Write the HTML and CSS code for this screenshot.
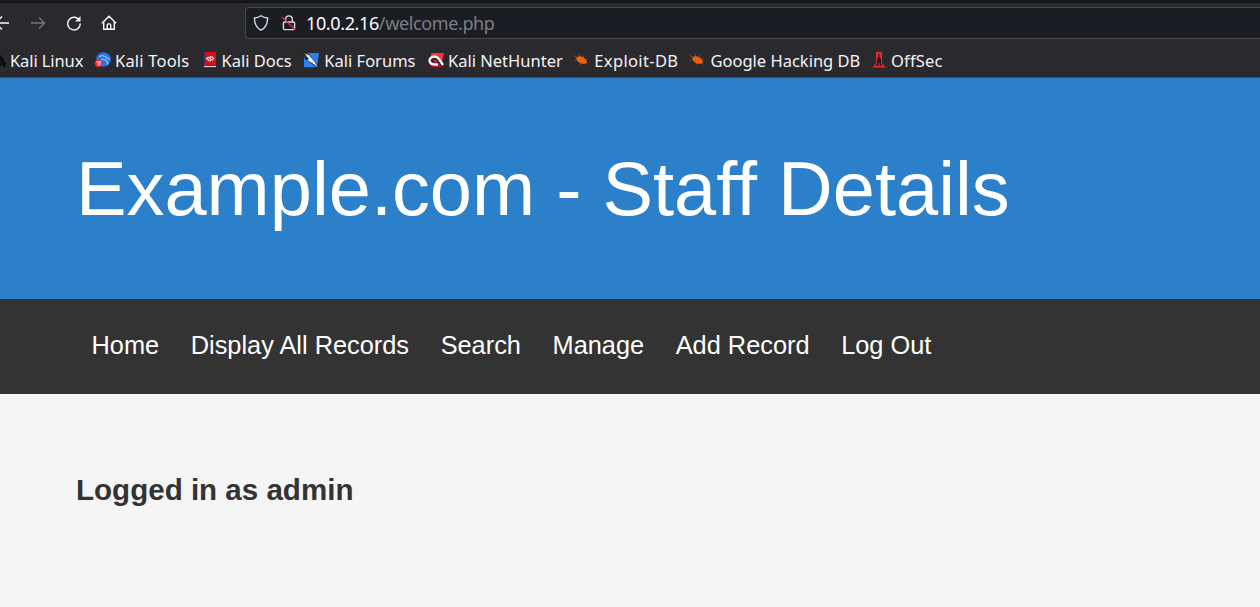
FILE: index.html
```
<!DOCTYPE html>
<html lang="en">
<head>
<meta charset="utf-8">
<title>Staff Details</title>
<link rel="stylesheet" href="styles.css">
</head>
<body>
<div class="browser">
  <div class="tab-edge"></div>
  <div class="toolbar">
    <div class="controls">
      <svg class="control" viewBox="0 0 16 16"><path d="M15 8H1.500M8 1.500 1.500 8 8 14.500"/></svg>
      <svg class="control disabled" viewBox="0 0 16 16"><path d="M1 8h13.500M9 2.500 14.500 8 9 13.500"/></svg>
      <svg class="control" viewBox="0 0 16 16"><path d="M12.700 4.400A6.300 6.300 0 1 0 14.300 8.500"/><path class="solid" d="M14.500 1v5.500H9z"/></svg>
      <svg class="control home" viewBox="0 0 16 16"><path d="M.9 8.200 8 1.200l7.100 7M2.700 7v7.300h10.600V7M6.300 14V9.900c0-.6.400-1 1-1h1.400c.6 0 1 .4 1 1V14"/></svg>
    </div>
    <div class="address">
      <svg class="shield" viewBox="0 0 16 16"><path d="M8 .8c2 1.500 4.300 2 6.600 2.200 0 5.900-1.600 9.700-6.600 12.200C3 12.700 1.400 8.900 1.400 3 3.700 2.800 6 2.300 8 .8z"/></svg>
      <svg class="lock" viewBox="0 0 16 16"><path d="M4.700 7V4.200a3.300 3.300 0 0 1 6.600 0V7M3.700 7h8.600q1.300 0 1.300 1.300v5q0 1.300-1.300 1.300H3.700q-1.300 0-1.300-1.300v-5Q2.400 7 3.700 7z"/><path class="slash" d="m1 2 13.500 13"/></svg>
      <span class="url"><span class="host">10.0.2.16</span>/welcome.php</span>
    </div>
  </div>
  <div class="bookmarks">
    <span class="bookmark tight"><svg viewBox="0 0 16 16"><path fill="none" stroke="#08090b" stroke-width="1.900" d="M5 2q7 1 8 7l3 4M6 6q6 0 7 6l2 3M5 10q5-1 6 4"/></svg>Kali Linux</span>
    <span class="bookmark loose"><svg viewBox="0 0 16 16"><circle cx="8.500" cy="7.500" r="7.300" fill="#2474ed"/><path d="M4 4.500q6-2 8 1.500l3 1M6 7.500q4-1 6 2l1 3" fill="none" stroke="#a9cffa" stroke-width="1.100"/><circle cx="3.700" cy="11.300" r="3.800" fill="#ed2632"/><path d="M1.500 9.800h4.800M3 10v3.500M5 10v3.500" stroke="#fff" stroke-width=".8"/></svg>Kali Tools</span>
    <span class="bookmark"><svg viewBox="0 0 16 16"><path fill="#df0c17" d="M2 0h12v13H2z"/><path fill="#472a72" d="M2 0h1v14H2z"/><path fill="#e7d8d8" d="M2 14h12v1H2z"/><path fill="#9b1018" d="M2 13h12v1H2zM2 15h12v1H2z"/><path d="M6.800 5 4.700 6.500 7 8.500M9.500 4.500l2.300 2-1.800 2M9 4.500 7.300 6l2 1.500L7.500 9.500" fill="none" stroke="#fff" stroke-width="1.100"/></svg>Kali Docs</span>
    <span class="bookmark forums"><svg viewBox="0 0 16 16"><path fill="#2583f4" d="M1 1h15l-2 14H1z"/><path fill="#111921" d="m0 0 6 2 10 13-4-1L2 7z"/><path fill="#eee" d="m0 1 6 2 5 6 4 6-6-4-5-3 2-1-4-4 3 1z"/></svg>Kali Forums</span>
    <span class="bookmark"><svg viewBox="0 0 16 16"><path fill="#f53440" d="M3 1h13l-2 9-5-5-6 2z"/><path fill="#b70a34" d="m0 9 3 6h11l-3-4-5 2z"/><path d="M10 12.500H6.500C1 12.500 0 7 4 5q4-1.700 7 2l4 6" fill="none" stroke="#f8f4f5" stroke-width="2.300"/><path fill="#d61d3a" d="M5 8.500q3-2 5 2H6z"/></svg>Kali NetHunter</span>
    <span class="bookmark wider"><svg class="bug" viewBox="0 0 16 16"><path d="m.5 3.500 4 2M7 5 5.500 1.500M10 6l1-3M12 8l3-2M12 10l2.500 2M8 10l-1 3M5 7 1 8.500"/><ellipse cx="8.600" cy="7.800" rx="5.600" ry="3.200" transform="rotate(26 8 8)"/></svg>Exploit-DB</span>
    <span class="bookmark"><svg class="bug" viewBox="0 0 16 16"><path d="m.5 3.500 4 2M7 5 5.500 1.500M10 6l1-3M12 8l3-2M12 10l2.500 2M8 10l-1 3M5 7 1 8.500"/><ellipse cx="8.600" cy="7.800" rx="5.600" ry="3.200" transform="rotate(26 8 8)"/></svg>Google Hacking DB</span>
    <span class="bookmark loose"><svg viewBox="0 0 16 16"><path fill="#e12a35" d="M5 0h6v11l3.500 4.500h-13L5 11z"/><path fill="#31131b" d="M7.400 2h1.200v3l1.400 2v3l1 4H8.600v-3H7.400v3H5l1-4V7l1.400-2z"/></svg>OffSec</span>
  </div>
</div>
<header class="banner"><h1>Example.com - Staff Details</h1></header>
<nav class="menu"><a>Home</a><a>Display All Records</a><a>Search</a><a>Manage</a><a>Add Record</a><a>Log Out</a></nav>
<main class="content"><h3>Logged in as admin</h3></main>
</body>
</html>
```
FILE: styles.css
```
* { box-sizing: border-box; }
body { margin: 0; height: 607px; overflow: hidden; background: #f5f5f5; color: #333; font-family: "Liberation Sans", Arial, sans-serif; }
.browser { height: 78px; overflow: hidden; background: #29292e; border-bottom: 1px solid #47484c; font-family: "Noto Sans", sans-serif; color: #f4f4f7; }
.tab-edge { height: 3px; background: linear-gradient(#18191d 0 2px, #101115 2px); }
.toolbar { display: flex; height: 40px; padding-top: 4px; }
.controls { display: flex; align-items: center; gap: 20px; width: 245px; height: 32px; }
.control { flex: none; width: 16px; height: 16px; fill: none; stroke: #fbfbfe; stroke-width: 1.4; }
.control:first-child { margin-left: -6px; }
.control.home { margin-left: -.7px; }
.disabled { stroke: #77777b; }
.solid { fill: #fbfbfe; stroke: none; }
.address { display: flex; flex: 1; align-items: center; height: 32px; padding-left: 7px; background: #1b1d25; border: 1px solid #47484d; border-right: 0; border-radius: 4px 0 0 4px; }
.address svg { width: 16px; height: 16px; fill: none; stroke: #ddddde; stroke-width: 1.4; }
.address .lock { margin-left: 12px; }
.address .slash { stroke: #e52455; stroke-width: 1.5; }
.url { margin-left: 9px; font-size: 18px; letter-spacing: -.38px; color: #7d7d82; white-space: nowrap; }
.host { color: #fbfbfe; }
.bookmarks { display: grid; grid-template-columns: 105px 106.5px 102.8px 123.7px 146.3px 116.2px 180.5px 80px; align-items: center; height: 34px; margin-left: -10px; font-size: 16.5px; white-space: nowrap; }
.bookmark { display: flex; align-items: center; gap: 4px; }
.bookmark svg { flex: none; width: 16px; height: 16px; }
.bookmark .bug { fill: #f1600c; stroke: #a34a1d; stroke-width: .8; margin-left: -1px; margin-right: 1px; }
.bug ellipse { stroke: none; }
.forums svg { margin-left: -1px; margin-right: 1px; }
.tight { letter-spacing: -.1px; }
.loose { letter-spacing: .2px; }
.wider { letter-spacing: .35px; }
.banner { height: 221px; padding: 67px 76px 0; background: #2c80c9; color: #fff; }
.banner h1 { margin: 0; font-size: 75.8px; font-weight: 400; line-height: 88px; white-space: nowrap; }
.menu { display: flex; gap: 31.6px; height: 95px; padding: 31px 90px 0 91.5px; background: #333; color: #fff; font-size: 25.35px; line-height: 30px; white-space: nowrap; }
.content { padding: 79px 76px 0; }
.content h3 { margin: 0; font-size: 29.55px; line-height: 34px; }
```
